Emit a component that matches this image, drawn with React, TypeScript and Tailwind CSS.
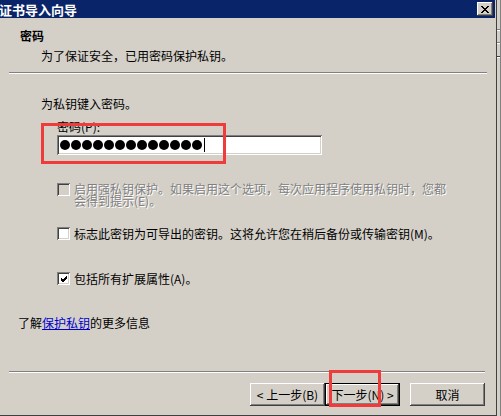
import { ReactNode } from "react"

const raised =
  "shadow-[inset_-1px_-1px_0_#404040,inset_1px_1px_0_#ffffff,inset_-2px_-2px_0_#808080]"

function CheckBox({ checked, disabled }: { checked?: boolean; disabled?: boolean }) {
  return (
    <div
      className={`w-[13px] h-[13px] shrink-0 flex items-center justify-center shadow-[inset_1px_1px_0_#808080,inset_-1px_-1px_0_#ffffff,inset_2px_2px_0_#404040,inset_-2px_-2px_0_#d4d0c8] ${
        disabled ? "bg-[#d4d0c8]" : "bg-white"
      }`}
    >
      {checked && (
        <svg width="7" height="7" viewBox="0 0 7 7" className="mt-[1px] ml-[1px]">
          <path d="M0 2 L2 4 L6 0 M0 3 L2 5 L6 1 M0 4 L2 6 L6 2" stroke="#000" strokeWidth="1" fill="none" shapeRendering="crispEdges" />
        </svg>
      )}
    </div>
  )
}

function Button({ children, isDefault }: { children: ReactNode; isDefault?: boolean }) {
  return (
    <div
      className={`w-[75px] h-[23px] flex items-center justify-center bg-[#d4d0c8] text-[12px] leading-[12px] text-black ${
        isDefault ? "border border-black shadow-[inset_-1px_-1px_0_#404040,inset_1px_1px_0_#ffffff,inset_-2px_-2px_0_#808080]" : raised
      }`}
    >
      {children}
    </div>
  )
}

export default function App() {
  const dots = Array.from({ length: 13 })

  return (
    <div className="w-[501px] h-[416px] flex bg-[#d4d0c8] font-['Noto_Sans_CJK_SC',sans-serif] text-[12px] leading-[12px] text-black overflow-hidden">
      {/* dialog window */}
      <div className="relative w-[496px] h-[416px] flex flex-col border-b border-[#404040]">
        <div className="h-[18px] bg-[#0a246a] flex items-center justify-between mr-[1px]">
          <span className="text-white font-bold text-[13px] leading-[13px] ml-[-1px]">证书导入向导</span>
          <div className={`w-[16px] h-[14px] mr-[2px] bg-[#d4d0c8] flex items-center justify-center ${raised}`}>
            <svg width="8" height="7" viewBox="0 0 8 7">
              <path d="M0 0 L7 7 M1 0 L8 7 M7 0 L0 7 M8 0 L1 7" stroke="#000" strokeWidth="1" fill="none" />
            </svg>
          </div>
        </div>

        <div className="mt-[12px] ml-[20px] font-bold">密码</div>
        <div className="mt-[8px] ml-[41px]">为了保证安全，已用密码保护私钥。</div>
        <div className="mt-[10px] mx-[9px] border-t border-[#808080] border-b border-b-white" />

        <div className="mt-[24px] ml-[41px]">为私钥键入密码。</div>
        <div className="mt-[11px] ml-[57px]">密码(P):</div>
        <div className="mt-[2px] ml-[57px] w-[265px] h-[20px] bg-white flex items-center pl-[3px] gap-[1px] shadow-[inset_1px_1px_0_#808080,inset_-1px_-1px_0_#ffffff,inset_2px_2px_0_#404040,inset_-2px_-2px_0_#d4d0c8]">
          {dots.map((_, i) => (
            <span key={i} className="w-[10px] h-[10px] rounded-full bg-black" />
          ))}
          <span className="w-[1px] h-[14px] bg-black ml-[1px]" />
        </div>

        <div className="mt-[28px] ml-[57px] flex items-start gap-[4px]">
          <CheckBox disabled />
          <div className="text-[#808080] leading-[12px] [text-shadow:1px_1px_0_#ffffff]">
            启用强私钥保护。如果启用这个选项，每次应用程序使用私钥时，您都
            <br />
            会得到提示(E)。
          </div>
        </div>

        <div className="mt-[20px] ml-[57px] flex items-center gap-[4px]">
          <CheckBox />
          <span>标志此密钥为可导出的密钥。这将允许您在稍后备份或传输密钥(M)。</span>
        </div>

        <div className="mt-[32px] ml-[57px] flex items-center gap-[4px]">
          <CheckBox checked />
          <span>包括所有扩展属性(A)。</span>
        </div>

        <div className="mt-[32px] ml-[18px]">
          了解<span className="text-[#0000cc] underline">保护私钥</span>的更多信息
        </div>

        <div className="mt-auto">
          <div className="mx-[9px] mr-[11px] border-t border-[#808080] border-b border-b-white" />
          <div className="mt-[10px] mb-[9px] flex justify-end pr-[11px]">
            <Button>&lt; 上一步(B)</Button>
            <Button isDefault>下一步(N) &gt;</Button>
            <div className="w-[10px]" />
            <Button>取消</Button>
          </div>
        </div>

        {/* red annotation boxes */}
        <div className="absolute left-[41px] top-[123px] w-[185px] h-[41px] border-[3px] border-[#ef3b3b]" />
        <div className="absolute left-[329px] top-[370px] w-[52px] h-[37px] border-[3px] border-[#ef3b3b]" />
      </div>

      {/* window frame edge and window behind */}
      <div className="w-[1px] h-full bg-[#404040]" />
      <div className="flex-1 h-full flex flex-col bg-[#d4d0c8] border-r border-[#808080]">
        <div className="mt-[29px] h-[2px] border-t border-[#808080] border-b border-b-white" />
        <div className="mt-[11px] h-[2px] border-t border-[#808080] border-b border-b-white" />
        <div className="mt-[12px] h-[2px] border-t border-[#404040] border-b border-b-white" />
      </div>
    </div>
  )
}
